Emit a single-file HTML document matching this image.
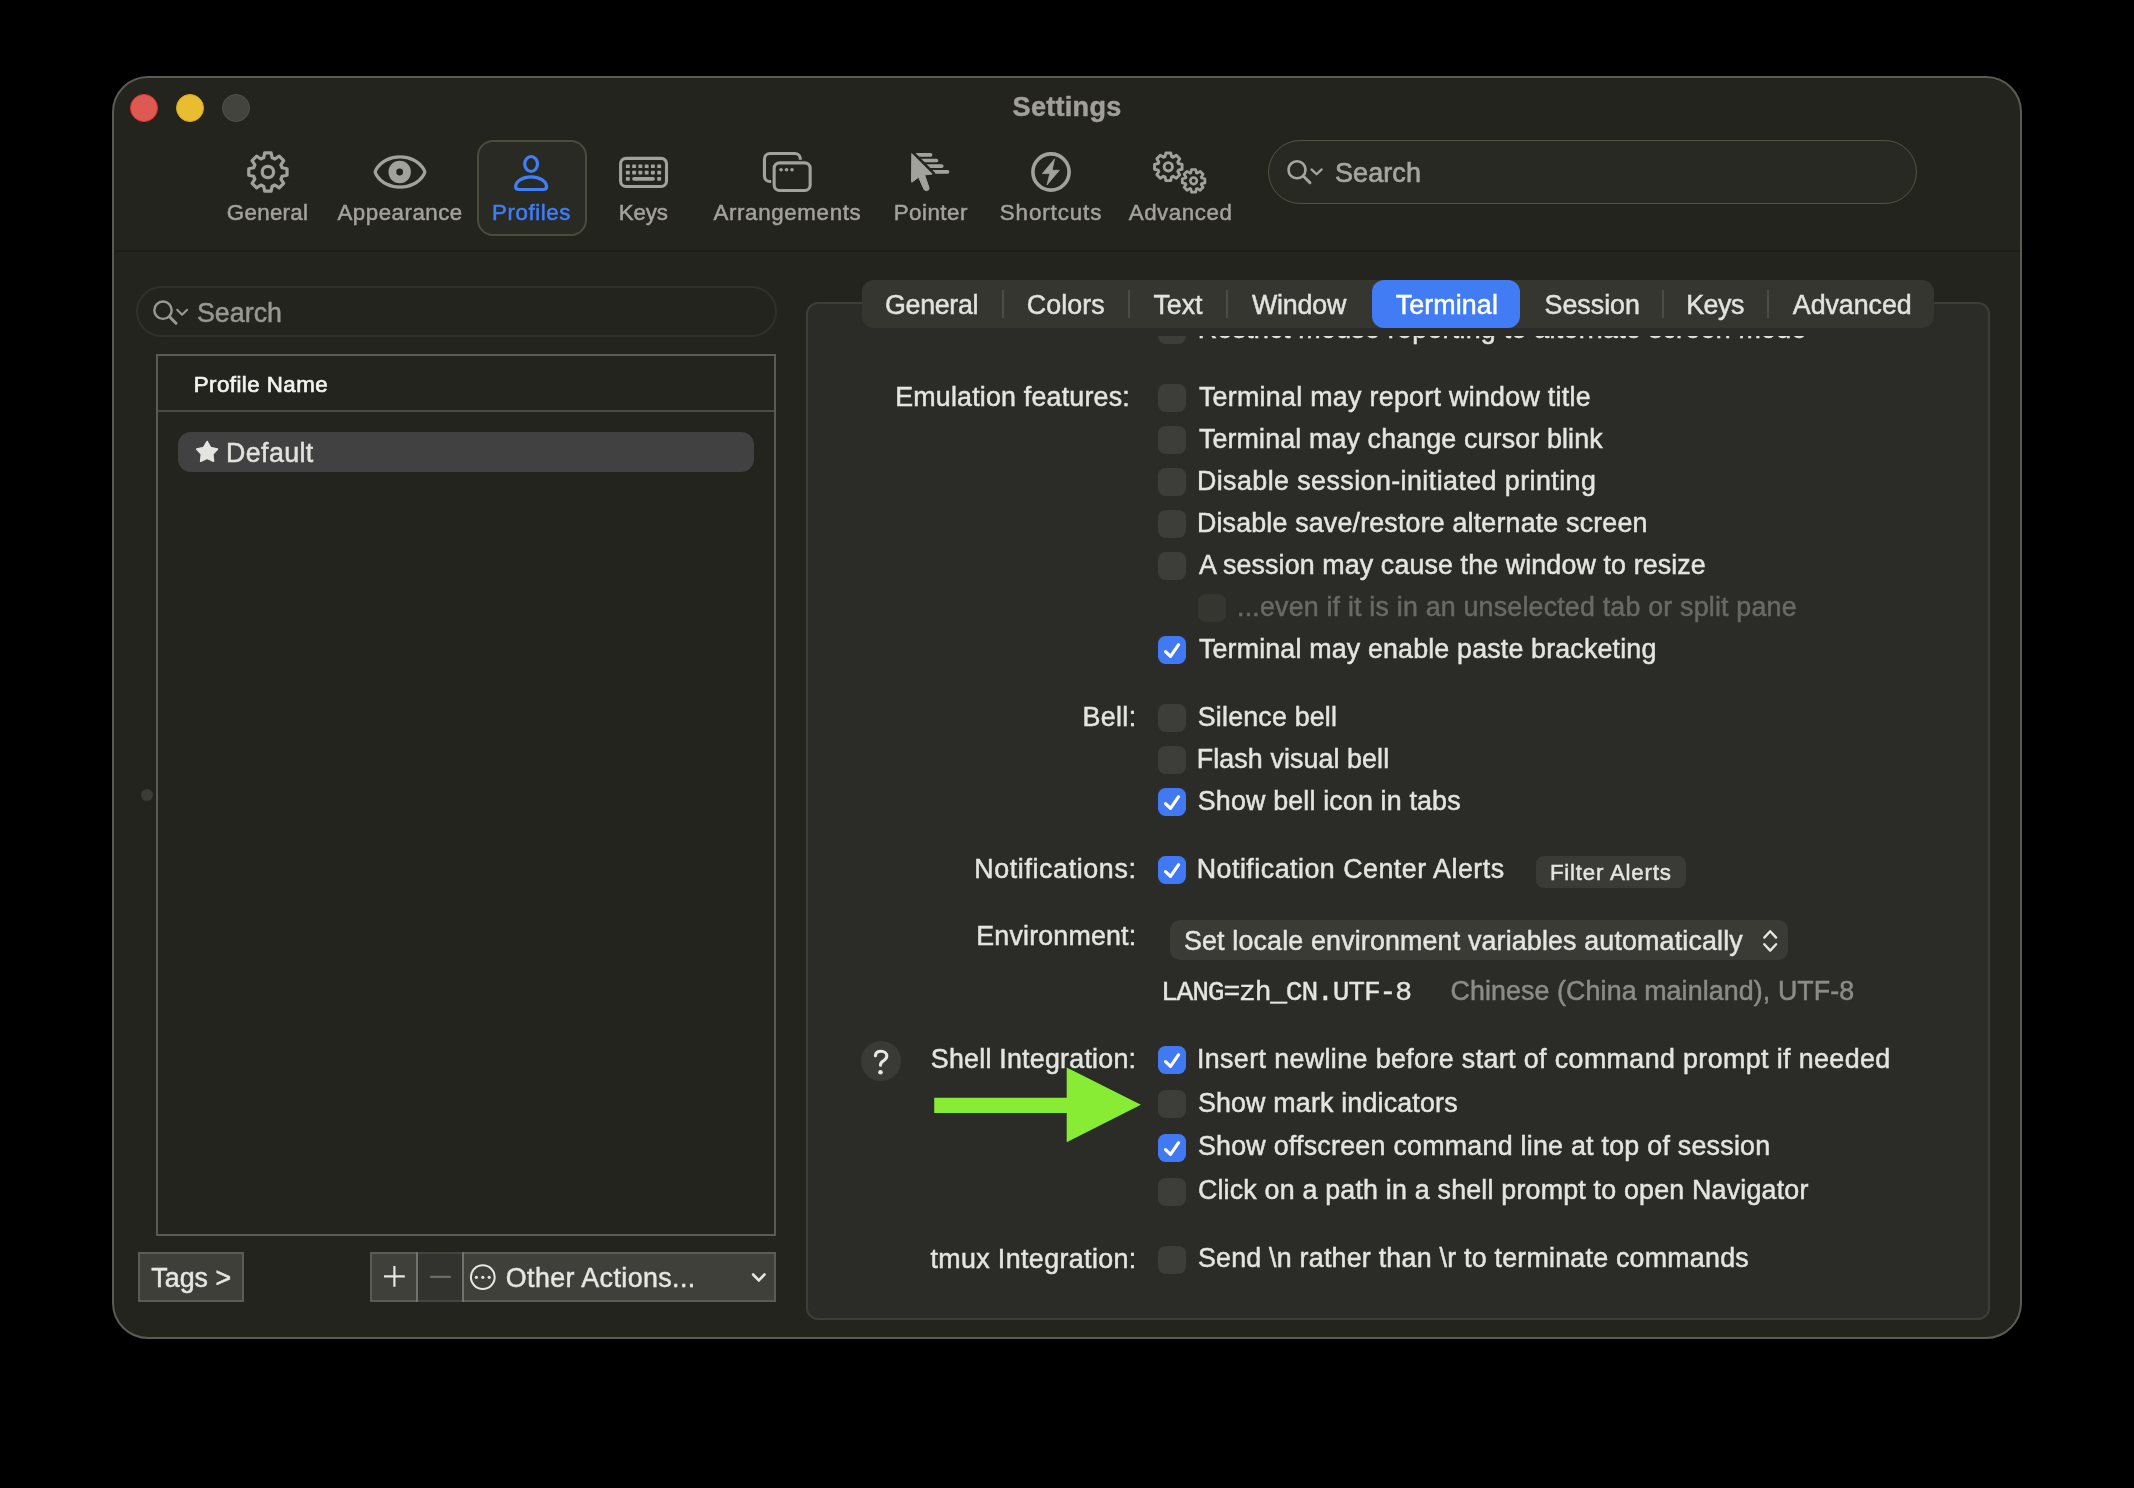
<!DOCTYPE html><html><head><meta charset='utf-8'><style>
*{margin:0;padding:0;box-sizing:border-box}
html,body{width:2134px;height:1488px;background:#000;overflow:hidden}
.a{position:absolute}
.t{position:absolute;white-space:pre;line-height:40px}
</style></head><body>
<div class="a" style="left:112px;top:76px;width:1910px;height:1263px;border:2px solid #5b5b55;border-radius:36px;background:#24241f"></div>
<div class="a" style="left:114px;top:250px;width:1906px;height:2px;background:#1d1d1a"></div>
<div class="a" style="left:477px;top:140px;width:110px;height:96px;border:2px solid #4b4c3e;border-radius:16px;background:#2a2a24"></div>
<div class="a" style="left:1268px;top:140px;width:649px;height:64px;border:1.5px solid #53543f;border-radius:32px;background:#292923"></div>
<div class="a" style="left:136px;top:286px;width:641px;height:51px;border:2px solid #2f322b;border-radius:25.5px"></div>
<div class="a" style="left:156px;top:354px;width:620px;height:882px;border:2px solid #5a5a56"></div>
<div class="a" style="left:158px;top:410px;width:616px;height:2px;background:#4a4a46"></div>
<div class="a" style="left:178px;top:432px;width:576px;height:40px;border-radius:13px;background:#414141"></div>
<div class="a" style="left:138px;top:1252px;width:106px;height:50px;border:2px solid #5b5c55;background:#3e3f39"></div>
<div class="a" style="left:370px;top:1252px;width:406px;height:50px;border:2px solid #5b5c55;background:#3f403a"></div>
<div class="a" style="left:417px;top:1252px;width:46px;height:50px;background:#32332e;border-top:2px solid #44453f;border-bottom:2px solid #44453f"></div>
<div class="a" style="left:416px;top:1252px;width:2px;height:50px;background:#72736c"></div>
<div class="a" style="left:462px;top:1252px;width:2px;height:50px;background:#72736c"></div>
<div class="a" style="left:806px;top:302px;width:1184px;height:1018px;border:2px solid #3d3e38;border-radius:12px;background:#2b2b27"></div>
<div class="a" style="left:862px;top:280px;width:1072px;height:48px;border-radius:12px;background:#353630"></div>
<div class="a" style="left:1372px;top:280px;width:148px;height:48px;border-radius:12px;background:#427cf5"></div>
<div class="a" style="left:1002px;top:290px;width:2px;height:28px;background:#4b4c46"></div>
<div class="a" style="left:1128px;top:290px;width:2px;height:28px;background:#4b4c46"></div>
<div class="a" style="left:1226px;top:290px;width:2px;height:28px;background:#4b4c46"></div>
<div class="a" style="left:1662px;top:290px;width:2px;height:28px;background:#4b4c46"></div>
<div class="a" style="left:1767px;top:290px;width:2px;height:28px;background:#4b4c46"></div>
<div class="a" style="left:1536px;top:856px;width:150px;height:32px;border-radius:8px;background:#3a3a36"></div>
<div class="a" style="left:1170px;top:920px;width:618px;height:40px;border-radius:10px;background:#3b3b36"></div>
<svg class="a" style="left:0;top:0" width="2134" height="1488" viewBox="0 0 2134 1488"><circle cx="144" cy="108" r="13.5" fill="#dd5a53" stroke="#e5322a" stroke-width="1"/><circle cx="190" cy="108" r="13.5" fill="#e8bd2f" stroke="#d9a91f" stroke-width="1"/><circle cx="236" cy="108" r="13.5" fill="#43443d" stroke="#50514a" stroke-width="1"/><path d="M263.65 157.82L264.70 152.87L271.10 152.87L272.15 157.82A14.80 14.80 0 0 1 274.92 158.97L279.17 156.21L283.69 160.73L280.93 164.98A14.80 14.80 0 0 1 282.08 167.75L287.03 168.80L287.03 175.20L282.08 176.25A14.80 14.80 0 0 1 280.93 179.02L283.69 183.27L279.17 187.79L274.92 185.03A14.80 14.80 0 0 1 272.15 186.18L271.10 191.13L264.70 191.13L263.65 186.18A14.80 14.80 0 0 1 260.88 185.03L256.63 187.79L252.11 183.27L254.87 179.02A14.80 14.80 0 0 1 253.72 176.25L248.77 175.20L248.77 168.80L253.72 167.75A14.80 14.80 0 0 1 254.87 164.98L252.11 160.73L256.63 156.21L260.88 158.97A14.80 14.80 0 0 1 263.65 157.82Z" fill="none" stroke="#a2a29c" stroke-width="3.2" stroke-linejoin="round"/><circle cx="267.9" cy="172" r="5.7" fill="none" stroke="#a2a29c" stroke-width="3.2"/><path d="M376.2 174.6 Q374.3 172 376.2 169.4 C386 152.6 414 152.6 423.8 169.4 Q425.7 172 423.8 174.6 C414 191.4 386 191.4 376.2 174.6Z" fill="none" stroke="#a2a29c" stroke-width="3.2" stroke-linejoin="round"/><circle cx="399.7" cy="172" r="11.2" fill="#a2a29c"/><circle cx="399.7" cy="172" r="3.4" fill="#24241f"/><ellipse cx="531.1" cy="164" rx="6.4" ry="7.5" fill="none" stroke="#3f7ff7" stroke-width="3.2"/><path d="M519 189.5 Q515.6 189.5 515.6 186.6 C516.2 181 522.5 176.9 531.1 176.9 C539.7 176.9 546 181 546.6 186.6 Q546.6 189.5 543.2 189.5 Z" fill="none" stroke="#3f7ff7" stroke-width="3.2" stroke-linejoin="round"/><rect x="620.6" y="158.35" width="45.9" height="28.15" rx="5.5" fill="none" stroke="#a2a29c" stroke-width="3.1"/><rect x="625.90" y="164.4" width="3.9" height="3.7" rx="0.7" fill="#a2a29c"/><rect x="632.16" y="164.4" width="3.9" height="3.7" rx="0.7" fill="#a2a29c"/><rect x="638.42" y="164.4" width="3.9" height="3.7" rx="0.7" fill="#a2a29c"/><rect x="644.68" y="164.4" width="3.9" height="3.7" rx="0.7" fill="#a2a29c"/><rect x="650.94" y="164.4" width="3.9" height="3.7" rx="0.7" fill="#a2a29c"/><rect x="657.20" y="164.4" width="3.9" height="3.7" rx="0.7" fill="#a2a29c"/><rect x="625.90" y="170.7" width="3.9" height="3.7" rx="0.7" fill="#a2a29c"/><rect x="632.16" y="170.7" width="3.9" height="3.7" rx="0.7" fill="#a2a29c"/><rect x="638.42" y="170.7" width="3.9" height="3.7" rx="0.7" fill="#a2a29c"/><rect x="644.68" y="170.7" width="3.9" height="3.7" rx="0.7" fill="#a2a29c"/><rect x="650.94" y="170.7" width="3.9" height="3.7" rx="0.7" fill="#a2a29c"/><rect x="657.20" y="170.7" width="3.9" height="3.7" rx="0.7" fill="#a2a29c"/><rect x="625.9" y="177" width="3.9" height="3.7" rx="0.7" fill="#a2a29c"/><rect x="632.2" y="177" width="22.7" height="3.7" rx="1.8" fill="#a2a29c"/><rect x="657.2" y="177" width="3.9" height="3.7" rx="0.7" fill="#a2a29c"/><rect x="764.45" y="153.55" width="35.9" height="28" rx="5.5" fill="none" stroke="#a2a29c" stroke-width="3.1"/><rect x="774.15" y="162.85" width="36" height="27.7" rx="5.5" fill="#24241f" stroke="#24241f" stroke-width="6"/><rect x="774.15" y="162.85" width="36" height="27.7" rx="5.5" fill="none" stroke="#a2a29c" stroke-width="3.1"/><circle cx="781.05" cy="169.8" r="1.8" fill="#a2a29c"/><circle cx="786.5" cy="169.8" r="1.8" fill="#a2a29c"/><circle cx="792" cy="169.8" r="1.8" fill="#a2a29c"/><line x1="913" y1="154.8" x2="930.6" y2="154.8" stroke="#a2a29c" stroke-width="3.7" stroke-linecap="round"/><line x1="918" y1="160.5" x2="936.4" y2="160.5" stroke="#a2a29c" stroke-width="3.7" stroke-linecap="round"/><line x1="923" y1="166.1" x2="941.7" y2="166.1" stroke="#a2a29c" stroke-width="3.7" stroke-linecap="round"/><line x1="928" y1="171.8" x2="947.5" y2="171.8" stroke="#a2a29c" stroke-width="3.7" stroke-linecap="round"/><path d="M911.8 153.6 L932.2 174.0 L924.6 175.0 L929.0 187.6 Q929.6 190.6 926.6 190.6 Q924.6 190.8 923.8 189.0 L918.6 177.2 L912.2 182.0 Q911.5 182.4 911.5 181.6 Z" fill="#24241f" stroke="#24241f" stroke-width="6" stroke-linejoin="round"/><path d="M911.8 153.6 L932.2 174.0 L924.6 175.0 L929.0 187.6 Q929.6 190.6 926.6 190.6 Q924.6 190.8 923.8 189.0 L918.6 177.2 L912.2 182.0 Q911.5 182.4 911.5 181.6 Z" fill="#a2a29c" stroke="#a2a29c" stroke-width="1" stroke-linejoin="round"/><circle cx="1051" cy="172" r="18.1" fill="none" stroke="#a2a29c" stroke-width="3.6"/><path d="M1054.6 158.9 L1042.4 173.6 L1049.8 173.6 L1047.0 184.9 L1059.3 170.3 L1052.1 170.3 Z" fill="#a2a29c" stroke="#a2a29c" stroke-width="0.8" stroke-linejoin="round"/><path d="M1165.00 156.73L1165.85 153.02L1170.75 153.02L1171.60 156.73A10.60 10.60 0 0 1 1173.09 157.34L1176.31 155.32L1179.78 158.79L1177.76 162.01A10.60 10.60 0 0 1 1178.37 163.50L1182.08 164.35L1182.08 169.25L1178.37 170.10A10.60 10.60 0 0 1 1177.76 171.59L1179.78 174.81L1176.31 178.28L1173.09 176.26A10.60 10.60 0 0 1 1171.60 176.87L1170.75 180.58L1165.85 180.58L1165.00 176.87A10.60 10.60 0 0 1 1163.51 176.26L1160.29 178.28L1156.82 174.81L1158.84 171.59A10.60 10.60 0 0 1 1158.23 170.10L1154.52 169.25L1154.52 164.35L1158.23 163.50A10.60 10.60 0 0 1 1158.84 162.01L1156.82 158.79L1160.29 155.32L1163.51 157.34A10.60 10.60 0 0 1 1165.00 156.73Z" fill="none" stroke="#a2a29c" stroke-width="2.9" stroke-linejoin="round"/><circle cx="1168.3" cy="166.8" r="4.15" fill="none" stroke="#a2a29c" stroke-width="2.9"/><path d="M1190.80 172.88L1191.50 169.49L1195.70 169.49L1196.40 172.88A8.40 8.40 0 0 1 1197.22 173.22L1200.11 171.32L1203.08 174.29L1201.18 177.18A8.40 8.40 0 0 1 1201.52 178.00L1204.91 178.70L1204.91 182.90L1201.52 183.60A8.40 8.40 0 0 1 1201.18 184.42L1203.08 187.31L1200.11 190.28L1197.22 188.38A8.40 8.40 0 0 1 1196.40 188.72L1195.70 192.11L1191.50 192.11L1190.80 188.72A8.40 8.40 0 0 1 1189.98 188.38L1187.09 190.28L1184.12 187.31L1186.02 184.42A8.40 8.40 0 0 1 1185.68 183.60L1182.29 182.90L1182.29 178.70L1185.68 178.00A8.40 8.40 0 0 1 1186.02 177.18L1184.12 174.29L1187.09 171.32L1189.98 173.22A8.40 8.40 0 0 1 1190.80 172.88Z" fill="none" stroke="#a2a29c" stroke-width="2.7" stroke-linejoin="round"/><circle cx="1193.6" cy="180.8" r="3.3" fill="none" stroke="#a2a29c" stroke-width="2.6"/><circle cx="1297" cy="169.8" r="8.5" fill="none" stroke="#a6a6a0" stroke-width="2.6"/><line x1="1303.2" y1="176" x2="1310" y2="182.8" stroke="#a6a6a0" stroke-width="2.9" stroke-linecap="round"/><path d="M1311.5 169.4 L1316.6 174.3 L1321.7 169.4" fill="none" stroke="#a6a6a0" stroke-width="2.2" stroke-linecap="round" stroke-linejoin="round"/><circle cx="163" cy="310.2" r="8.7" fill="none" stroke="#999993" stroke-width="2.4"/><line x1="169.3" y1="316.5" x2="176" y2="323.2" stroke="#999993" stroke-width="3" stroke-linecap="round"/><path d="M177.2 309.8 L182.1 314.8 L187.1 309.8" fill="none" stroke="#999993" stroke-width="2" stroke-linecap="round" stroke-linejoin="round"/><path d="M207.10 441.60 L210.57 447.63 L217.37 449.06 L212.71 454.22 L213.45 461.14 L207.10 458.30 L200.75 461.14 L201.49 454.22 L196.83 449.06 L203.63 447.63Z" fill="#e4e4e0" stroke="#e4e4e0" stroke-width="1.8" stroke-linejoin="round"/><path d="M394.4 1266 V1286.8 M384 1276.4 H404.8" stroke="#e6e6e2" stroke-width="2.2"/><path d="M431 1276.9 H450" stroke="#6b6c66" stroke-width="2.2" stroke-linecap="round"/><circle cx="482.8" cy="1277.1" r="11.9" fill="none" stroke="#e6e6e2" stroke-width="2"/><circle cx="476.4" cy="1277.3" r="1.6" fill="#e6e6e2"/><circle cx="482.8" cy="1277.3" r="1.6" fill="#e6e6e2"/><circle cx="489.2" cy="1277.3" r="1.6" fill="#e6e6e2"/><path d="M753.2 1274.6 L758.8 1280.4 L764.4 1274.6" fill="none" stroke="#e6e6e2" stroke-width="2.8" stroke-linecap="round" stroke-linejoin="round"/><circle cx="147" cy="795" r="6" fill="#3b3c36"/><rect x="1158" y="384" width="28" height="28" rx="7.5" fill="#3d3e39"/><rect x="1158" y="426" width="28" height="28" rx="7.5" fill="#3d3e39"/><rect x="1158" y="468" width="28" height="28" rx="7.5" fill="#3d3e39"/><rect x="1158" y="510" width="28" height="28" rx="7.5" fill="#3d3e39"/><rect x="1158" y="552" width="28" height="28" rx="7.5" fill="#3d3e39"/><rect x="1198" y="594" width="28" height="28" rx="7.5" fill="#353630"/><rect x="1158" y="636" width="28" height="28" rx="7.5" fill="#4179f5"/><path d="M1165.5 651.6 L1170.5 656.3 L1178.6 644.7" fill="none" stroke="#fff" stroke-width="3.2" stroke-linecap="round" stroke-linejoin="round"/><rect x="1158" y="704" width="28" height="28" rx="7.5" fill="#3d3e39"/><rect x="1158" y="746" width="28" height="28" rx="7.5" fill="#3d3e39"/><rect x="1158" y="788" width="28" height="28" rx="7.5" fill="#4179f5"/><path d="M1165.5 803.6 L1170.5 808.3 L1178.6 796.7" fill="none" stroke="#fff" stroke-width="3.2" stroke-linecap="round" stroke-linejoin="round"/><rect x="1158" y="856" width="28" height="28" rx="7.5" fill="#4179f5"/><path d="M1165.5 871.6 L1170.5 876.3 L1178.6 864.7" fill="none" stroke="#fff" stroke-width="3.2" stroke-linecap="round" stroke-linejoin="round"/><rect x="1158" y="1046" width="28" height="28" rx="7.5" fill="#4179f5"/><path d="M1165.5 1061.6 L1170.5 1066.3 L1178.6 1054.7" fill="none" stroke="#fff" stroke-width="3.2" stroke-linecap="round" stroke-linejoin="round"/><rect x="1158" y="1090" width="28" height="28" rx="7.5" fill="#3d3e39"/><rect x="1158" y="1134" width="28" height="28" rx="7.5" fill="#4179f5"/><path d="M1165.5 1149.6 L1170.5 1154.3 L1178.6 1142.7" fill="none" stroke="#fff" stroke-width="3.2" stroke-linecap="round" stroke-linejoin="round"/><rect x="1158" y="1178" width="28" height="28" rx="7.5" fill="#3d3e39"/><rect x="1158" y="1246" width="28" height="28" rx="7.5" fill="#3d3e39"/><path d="M1764.3 937.6 L1770.2 931.2 L1776.1 937.6 M1764.3 944.2 L1770.2 950.6 L1776.1 944.2" fill="none" stroke="#e4e4e0" stroke-width="2.4" stroke-linecap="round" stroke-linejoin="round"/><circle cx="881" cy="1061" r="20" fill="#3a3a36"/><path d="M875.4 1055.8 C875.6 1052.8 878 1051.3 881 1051.3 C884.4 1051.3 886.8 1053.3 886.8 1056.1 C886.8 1058.7 884.8 1059.9 883 1061.1 C881.4 1062.1 880.5 1063.1 880.5 1065.3" fill="none" stroke="#e6e6e2" stroke-width="3.1" stroke-linecap="round" stroke-linejoin="round"/><circle cx="880.5" cy="1072.2" r="2.3" fill="#e6e6e2"/><path d="M934.2 1097.8 H1066.7 V1067.6 L1140.9 1104.8 L1066.7 1142.2 V1113 H934.2 Z" fill="#89ec34"/></svg>
<div class="a" style="left:806px;top:336px;width:1184px;height:40px;overflow:hidden">
 <svg class="a" style="left:-806px;top:-336px" width="2134" height="1488" viewBox="0 0 2134 1488"><rect x="1158" y="316" width="28" height="28" rx="7.5" fill="#3d3e39"/></svg>
 <div class="a" style="left:-806px;top:-336px;width:2134px;height:1488px;will-change:transform"><div class="t" style="left:1197.7px;top:309px;font-family:'Liberation Sans', sans-serif;font-size:26.8px;font-weight:400;letter-spacing:0.269px;-webkit-text-stroke:0.5px #e4e4e0;color:#e4e4e0">Restrict mouse reporting to alternate screen mode</div></div>
</div>
<div class="a" style="left:0;top:0;width:2134px;height:1488px;will-change:transform">
<div class="t" style="left:1012.6px;top:87px;font-family:'Liberation Sans', sans-serif;font-size:27px;font-weight:700;letter-spacing:0.300px;-webkit-text-stroke:0.5px #a19f99;color:#a19f99">Settings</div>
<div class="t" style="left:226.8px;top:193px;font-family:'Liberation Sans', sans-serif;font-size:22.3px;font-weight:400;letter-spacing:0.317px;-webkit-text-stroke:0.5px #a3a29c;color:#a3a29c">General</div>
<div class="t" style="left:337.5px;top:193px;font-family:'Liberation Sans', sans-serif;font-size:22.3px;font-weight:400;letter-spacing:0.500px;-webkit-text-stroke:0.5px #a3a29c;color:#a3a29c">Appearance</div>
<div class="t" style="left:492.0px;top:193px;font-family:'Liberation Sans', sans-serif;font-size:22.3px;font-weight:400;letter-spacing:0.571px;-webkit-text-stroke:0.5px #3f7ff7;color:#3f7ff7">Profiles</div>
<div class="t" style="left:618.7px;top:193px;font-family:'Liberation Sans', sans-serif;font-size:22.3px;font-weight:400;letter-spacing:-0.133px;-webkit-text-stroke:0.5px #a3a29c;color:#a3a29c">Keys</div>
<div class="t" style="left:713.4px;top:193px;font-family:'Liberation Sans', sans-serif;font-size:22.3px;font-weight:400;letter-spacing:0.664px;-webkit-text-stroke:0.5px #a3a29c;color:#a3a29c">Arrangements</div>
<div class="t" style="left:893.7px;top:193px;font-family:'Liberation Sans', sans-serif;font-size:22.3px;font-weight:400;letter-spacing:0.500px;-webkit-text-stroke:0.5px #a3a29c;color:#a3a29c">Pointer</div>
<div class="t" style="left:999.8px;top:193px;font-family:'Liberation Sans', sans-serif;font-size:22.3px;font-weight:400;letter-spacing:0.913px;-webkit-text-stroke:0.5px #a3a29c;color:#a3a29c">Shortcuts</div>
<div class="t" style="left:1128.7px;top:193px;font-family:'Liberation Sans', sans-serif;font-size:22.3px;font-weight:400;letter-spacing:0.571px;-webkit-text-stroke:0.5px #a3a29c;color:#a3a29c">Advanced</div>
<div class="t" style="left:1335.0px;top:153px;font-family:'Liberation Sans', sans-serif;font-size:27px;font-weight:400;letter-spacing:0.080px;-webkit-text-stroke:0.7px #a6a6a0;color:#a6a6a0">Search</div>
<div class="t" style="left:196.9px;top:293px;font-family:'Liberation Sans', sans-serif;font-size:26.8px;font-weight:400;letter-spacing:0.040px;-webkit-text-stroke:0.5px #999993;color:#999993">Search</div>
<div class="t" style="left:193.7px;top:365px;font-family:'Liberation Sans', sans-serif;font-size:22.3px;font-weight:400;letter-spacing:0.464px;-webkit-text-stroke:0.7px #f2f2ee;color:#f2f2ee">Profile Name</div>
<div class="t" style="left:226.0px;top:433px;font-family:'Liberation Sans', sans-serif;font-size:26.8px;font-weight:400;letter-spacing:0.400px;-webkit-text-stroke:0.5px #e2e2de;color:#e2e2de">Default</div>
<div class="t" style="left:151.3px;top:1258px;font-family:'Liberation Sans', sans-serif;font-size:26.8px;font-weight:400;letter-spacing:0.020px;-webkit-text-stroke:0.5px #e6e6e2;color:#e6e6e2">Tags &gt;</div>
<div class="t" style="left:505.8px;top:1258px;font-family:'Liberation Sans', sans-serif;font-size:26.8px;font-weight:400;letter-spacing:0.420px;-webkit-text-stroke:0.5px #e6e6e2;color:#e6e6e2">Other Actions...</div>
<div class="t" style="left:885.0px;top:285px;font-family:'Liberation Sans', sans-serif;font-size:26.8px;font-weight:400;letter-spacing:-0.300px;-webkit-text-stroke:0.5px #e2e2de;color:#e2e2de">General</div>
<div class="t" style="left:1026.8px;top:285px;font-family:'Liberation Sans', sans-serif;font-size:26.8px;font-weight:400;letter-spacing:0.100px;-webkit-text-stroke:0.5px #e2e2de;color:#e2e2de">Colors</div>
<div class="t" style="left:1153.6px;top:285px;font-family:'Liberation Sans', sans-serif;font-size:26.8px;font-weight:400;letter-spacing:-0.133px;-webkit-text-stroke:0.5px #e2e2de;color:#e2e2de">Text</div>
<div class="t" style="left:1252.0px;top:285px;font-family:'Liberation Sans', sans-serif;font-size:26.8px;font-weight:400;letter-spacing:-0.200px;-webkit-text-stroke:0.5px #e2e2de;color:#e2e2de">Window</div>
<div class="t" style="left:1395.7px;top:285px;font-family:'Liberation Sans', sans-serif;font-size:26.8px;font-weight:400;letter-spacing:0.129px;-webkit-text-stroke:0.5px #ffffff;color:#ffffff">Terminal</div>
<div class="t" style="left:1544.5px;top:285px;font-family:'Liberation Sans', sans-serif;font-size:26.8px;font-weight:400;letter-spacing:0.017px;-webkit-text-stroke:0.5px #e2e2de;color:#e2e2de">Session</div>
<div class="t" style="left:1686.2px;top:285px;font-family:'Liberation Sans', sans-serif;font-size:26.8px;font-weight:400;letter-spacing:-0.467px;-webkit-text-stroke:0.5px #e2e2de;color:#e2e2de">Keys</div>
<div class="t" style="left:1792.8px;top:285px;font-family:'Liberation Sans', sans-serif;font-size:26.8px;font-weight:400;letter-spacing:-0.043px;-webkit-text-stroke:0.5px #e2e2de;color:#e2e2de">Advanced</div>
<div class="t" style="left:895.2px;top:377px;font-family:'Liberation Sans', sans-serif;font-size:26.8px;font-weight:400;letter-spacing:0.206px;-webkit-text-stroke:0.5px #e4e4e0;color:#e4e4e0">Emulation features:</div>
<div class="t" style="left:1198.9px;top:377px;font-family:'Liberation Sans', sans-serif;font-size:26.8px;font-weight:400;letter-spacing:0.294px;-webkit-text-stroke:0.5px #e4e4e0;color:#e4e4e0">Terminal may report window title</div>
<div class="t" style="left:1198.9px;top:419px;font-family:'Liberation Sans', sans-serif;font-size:26.8px;font-weight:400;letter-spacing:0.148px;-webkit-text-stroke:0.5px #e4e4e0;color:#e4e4e0">Terminal may change cursor blink</div>
<div class="t" style="left:1196.9px;top:461px;font-family:'Liberation Sans', sans-serif;font-size:26.8px;font-weight:400;letter-spacing:0.445px;-webkit-text-stroke:0.5px #e4e4e0;color:#e4e4e0">Disable session-initiated printing</div>
<div class="t" style="left:1196.9px;top:503px;font-family:'Liberation Sans', sans-serif;font-size:26.8px;font-weight:400;letter-spacing:0.186px;-webkit-text-stroke:0.5px #e4e4e0;color:#e4e4e0">Disable save/restore alternate screen</div>
<div class="t" style="left:1198.9px;top:545px;font-family:'Liberation Sans', sans-serif;font-size:26.8px;font-weight:400;letter-spacing:0.126px;-webkit-text-stroke:0.5px #e4e4e0;color:#e4e4e0">A session may cause the window to resize</div>
<div class="t" style="left:1237.0px;top:587px;font-family:'Liberation Sans', sans-serif;font-size:26.8px;font-weight:400;letter-spacing:0.198px;-webkit-text-stroke:0.5px #6a6a65;color:#6a6a65">...even if it is in an unselected tab or split pane</div>
<div class="t" style="left:1198.9px;top:629px;font-family:'Liberation Sans', sans-serif;font-size:26.8px;font-weight:400;letter-spacing:0.174px;-webkit-text-stroke:0.5px #e4e4e0;color:#e4e4e0">Terminal may enable paste bracketing</div>
<div class="t" style="left:1082.6px;top:697px;font-family:'Liberation Sans', sans-serif;font-size:26.8px;font-weight:400;letter-spacing:0.350px;-webkit-text-stroke:0.5px #e4e4e0;color:#e4e4e0">Bell:</div>
<div class="t" style="left:1197.8px;top:697px;font-family:'Liberation Sans', sans-serif;font-size:26.8px;font-weight:400;letter-spacing:0.191px;-webkit-text-stroke:0.5px #e4e4e0;color:#e4e4e0">Silence bell</div>
<div class="t" style="left:1196.8px;top:739px;font-family:'Liberation Sans', sans-serif;font-size:26.8px;font-weight:400;letter-spacing:0.106px;-webkit-text-stroke:0.5px #e4e4e0;color:#e4e4e0">Flash visual bell</div>
<div class="t" style="left:1197.8px;top:781px;font-family:'Liberation Sans', sans-serif;font-size:26.8px;font-weight:400;letter-spacing:0.171px;-webkit-text-stroke:0.5px #e4e4e0;color:#e4e4e0">Show bell icon in tabs</div>
<div class="t" style="left:974.2px;top:849px;font-family:'Liberation Sans', sans-serif;font-size:26.8px;font-weight:400;letter-spacing:0.638px;-webkit-text-stroke:0.5px #e4e4e0;color:#e4e4e0">Notifications:</div>
<div class="t" style="left:1196.7px;top:849px;font-family:'Liberation Sans', sans-serif;font-size:26.8px;font-weight:400;letter-spacing:0.500px;-webkit-text-stroke:0.5px #e4e4e0;color:#e4e4e0">Notification Center Alerts</div>
<div class="t" style="left:1549.9px;top:853px;font-family:'Liberation Sans', sans-serif;font-size:22.3px;font-weight:400;letter-spacing:0.792px;-webkit-text-stroke:0.5px #e4e4e0;color:#e4e4e0">Filter Alerts</div>
<div class="t" style="left:976.3px;top:916px;font-family:'Liberation Sans', sans-serif;font-size:26.8px;font-weight:400;letter-spacing:0.182px;-webkit-text-stroke:0.5px #e4e4e0;color:#e4e4e0">Environment:</div>
<div class="t" style="left:1184.0px;top:921px;font-family:'Liberation Sans', sans-serif;font-size:26.8px;font-weight:400;letter-spacing:0.169px;-webkit-text-stroke:0.5px #e4e4e0;color:#e4e4e0">Set locale environment variables automatically</div>
<div class="t" style="left:1160.9px;top:973px;font-family:'Liberation Mono', monospace;font-size:28px;font-weight:400;letter-spacing:-1.180px;-webkit-text-stroke:0.4px #e4e4e0;color:#e4e4e0">LANG=zh_CN.UTF-8</div>
<div class="t" style="left:1450.5px;top:971px;font-family:'Liberation Sans', sans-serif;font-size:26.8px;font-weight:400;letter-spacing:0.103px;-webkit-text-stroke:0.5px #8c8c87;color:#8c8c87">Chinese (China mainland), UTF-8</div>
<div class="t" style="left:930.8px;top:1039px;font-family:'Liberation Sans', sans-serif;font-size:26.8px;font-weight:400;letter-spacing:0.241px;-webkit-text-stroke:0.5px #e4e4e0;color:#e4e4e0">Shell Integration:</div>
<div class="t" style="left:1196.9px;top:1039px;font-family:'Liberation Sans', sans-serif;font-size:26.8px;font-weight:400;letter-spacing:0.398px;-webkit-text-stroke:0.5px #e4e4e0;color:#e4e4e0">Insert newline before start of command prompt if needed</div>
<div class="t" style="left:1197.9px;top:1083px;font-family:'Liberation Sans', sans-serif;font-size:26.8px;font-weight:400;letter-spacing:0.184px;-webkit-text-stroke:0.5px #e4e4e0;color:#e4e4e0">Show mark indicators</div>
<div class="t" style="left:1197.9px;top:1126px;font-family:'Liberation Sans', sans-serif;font-size:26.8px;font-weight:400;letter-spacing:0.255px;-webkit-text-stroke:0.5px #e4e4e0;color:#e4e4e0">Show offscreen command line at top of session</div>
<div class="t" style="left:1197.9px;top:1170px;font-family:'Liberation Sans', sans-serif;font-size:26.8px;font-weight:400;letter-spacing:0.204px;-webkit-text-stroke:0.5px #e4e4e0;color:#e4e4e0">Click on a path in a shell prompt to open Navigator</div>
<div class="t" style="left:930.4px;top:1239px;font-family:'Liberation Sans', sans-serif;font-size:26.8px;font-weight:400;letter-spacing:0.394px;-webkit-text-stroke:0.5px #e4e4e0;color:#e4e4e0">tmux Integration:</div>
<div class="t" style="left:1197.9px;top:1238px;font-family:'Liberation Sans', sans-serif;font-size:26.8px;font-weight:400;letter-spacing:0.235px;-webkit-text-stroke:0.5px #e4e4e0;color:#e4e4e0">Send \n rather than \r to terminate commands</div>

</div>
</body></html>
